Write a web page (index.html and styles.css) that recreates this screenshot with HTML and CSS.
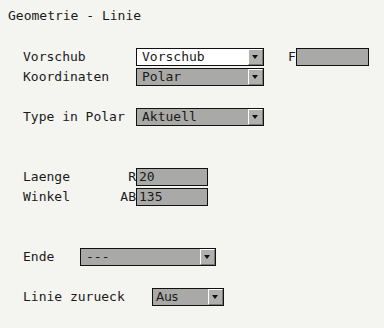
FILE: index.html
```html
<!DOCTYPE html>
<html lang="de">
<head>
<meta charset="UTF-8">
<title>Geometrie - Linie</title>
<link rel="stylesheet" href="styles.css">
</head>
<body>
<div class="dlg">
    <div class="title">Geometrie - Linie</div>
    <div class="form">
        <div class="space"></div>
        <div class="row">
            <span class="lbl">Vorschub</span>
            <div class="sel light w128"><span class="val">Vorschub</span><i class="btn"></i></div>
            <span class="flbl">F</span>
            <div class="inp w73"></div>
        </div>
        <div class="row">
            <span class="lbl">Koordinaten</span>
            <div class="sel w128"><span class="val">Polar</span><i class="btn"></i></div>
        </div>
        <div class="space"></div>
        <div class="row">
            <span class="lbl">Type in Polar</span>
            <div class="sel w128"><span class="val">Aktuell</span><i class="btn"></i></div>
        </div>
        <div class="space double"></div>
        <div class="row">
            <span class="lbl split"><span>Laenge</span><span>R</span></span>
            <div class="inp w72"><span class="val">20</span></div>
        </div>
        <div class="row">
            <span class="lbl split"><span>Winkel</span><span>AB</span></span>
            <div class="inp w72"><span class="val">135</span></div>
        </div>
        <div class="space double"></div>
        <div class="row">
            <span class="lbl short">Ende</span>
            <div class="sel w136"><span class="val">---</span><i class="btn"></i></div>
        </div>
        <div class="space"></div>
        <div class="row">
            <span class="lbl long">Linie zurueck</span>
            <div class="sel w72"><span class="val sans">Aus</span><i class="btn"></i></div>
        </div>
    </div>
</div>
</body>
</html>
```

FILE: styles.css
```css
body {
    margin: 0;
    background-color: #f4f4f1;
    font-family: "DejaVu Sans Mono", monospace;
    font-size: 13px;
    color: #1a1a1a;
}
.dlg {
    padding-top: 6px;
}
.title {
    height: 20px;
    line-height: 20px;
    padding-left: 8px;
}
.form {
    padding-left: 23px;
}
.space {
    height: 20px;
}
.space.double {
    height: 40px;
}
.row {
    display: flex;
    align-items: center;
    height: 20px;
}
.lbl {
    width: 113px;
    white-space: pre;
}
.lbl.split {
    display: flex;
    justify-content: space-between;
}
.lbl.short {
    width: 57px;
}
.lbl.long {
    width: 129px;
}
.flbl {
    margin-left: 24px;
    width: 8px;
}
.sel, .inp {
    box-sizing: border-box;
    height: 18px;
    border: 1px solid #111;
    background-color: #a9a9a7;
    display: flex;
    align-items: center;
    margin-top: 1px;
}
.sel.light {
    background-color: #fff;
}
.val {
    flex: 1;
    padding-left: 5px;
    line-height: 16px;
}
.inp .val {
    padding-left: 2px;
}
.val.sans {
    font-family: "DejaVu Sans", sans-serif;
    font-size: 12px;
    padding-left: 3px;
}
.btn {
    box-sizing: border-box;
    width: 15px;
    height: 16px;
    margin-right: 0;
    background-color: #b0b0ae;
    border-top: 1px solid #fff;
    border-left: 1px solid #fff;
    border-right: 1px solid #7a7a7a;
    border-bottom: 1px solid #7a7a7a;
    position: relative;
}
.btn::after {
    content: "";
    position: absolute;
    left: 3px;
    top: 5px;
    border-left: 3.5px solid transparent;
    border-right: 3.5px solid transparent;
    border-top: 4px solid #111;
}
.w128 { width: 128px; }
.w136 { width: 136px; }
.w72 { width: 72px; }
.w73 { width: 73px; }
```
